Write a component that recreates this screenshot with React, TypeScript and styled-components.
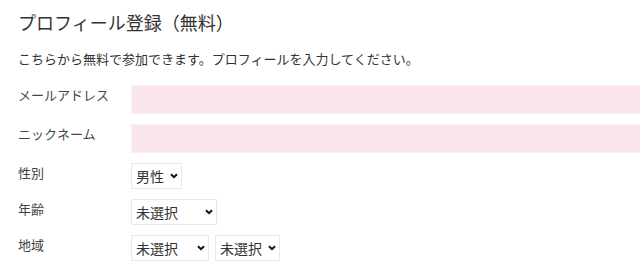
import React from "react";
import styled, { createGlobalStyle } from "styled-components";

const Global = createGlobalStyle`
  html, body { margin: 0; padding: 0; background: #fff; }
  body { font-family: "Noto Sans CJK JP", "Noto Sans", sans-serif; color: #333; }
`;

const Page = styled.div`
  padding: 9px 0 0 18px;
  overflow: hidden;
  width: 640px;
  box-sizing: border-box;
`;

const Title = styled.h1`
  margin: 0;
  font-size: 18px;
  line-height: 27px;
  font-weight: 400;
  color: #333;
`;

const Lead = styled.p`
  margin: 13px 0 0;
  font-size: 13px;
  line-height: 20px;
  color: #333;
`;

const Form = styled.div`
  margin-top: 16px;
  display: flex;
  flex-direction: column;
  gap: 10px;
`;

const Row = styled.div`
  display: flex;
  align-items: flex-start;
`;

const Label = styled.div`
  width: 113px;
  flex: none;
  font-size: 13px;
  line-height: 20px;
  padding-top: 0;
  color: #444;
`;

const TextInput = styled.input`
  flex: 1;
  height: 29px;
  box-sizing: border-box;
  border: 1px solid #fbeef4;
  border-right: none;
  background: #fae5ee;
  margin: 0;
  outline: none;
`;

const Selects = styled.div`
  display: flex;
  gap: 6px;
`;

const SelectWrap = styled.div<{ $w: number }>`
  position: relative;
  width: ${(p) => p.$w}px;
  height: 26px;
`;

const Select = styled.select`
  appearance: none;
  -webkit-appearance: none;
  width: 100%;
  height: 100%;
  box-sizing: border-box;
  border: 1px solid #e8e8e8;
  border-radius: 0;
  background: #fff;
  padding: 0 0 0 4px;
  margin: 0;
  font-family: "Noto Sans CJK JP", sans-serif;
  font-size: 14px;
  color: #333;
  outline: none;
`;

const Chevron = styled.svg`
  position: absolute;
  right: 4px;
  top: 10px;
  width: 8px;
  height: 6px;
  pointer-events: none;
`;

function Sel({ w, value, options }: { w: number; value: string; options: string[] }) {
  return (
    <SelectWrap $w={w}>
      <Select defaultValue={value}>
        {options.map((o) => (
          <option key={o}>{o}</option>
        ))}
      </Select>
      <Chevron viewBox="0 0 8 6">
        <path d="M1 1.2 L4 4.2 L7 1.2" fill="none" stroke="#111" strokeWidth="2" />
      </Chevron>
    </SelectWrap>
  );
}

export default function App() {
  return (
    <>
      <Global />
      <Page>
        <Title>プロフィール登録（無料）</Title>
        <Lead>こちらから無料で参加できます。プロフィールを入力してください。</Lead>
        <Form>
          <Row>
            <Label>メールアドレス</Label>
            <TextInput type="text" />
          </Row>
          <Row>
            <Label>ニックネーム</Label>
            <TextInput type="text" />
          </Row>
          <Row>
            <Label>性別</Label>
            <Sel w={51} value="男性" options={["男性", "女性"]} />
          </Row>
          <Row>
            <Label>年齢</Label>
            <Sel w={86} value="未選択" options={["未選択", "20歳〜24歳", "25歳〜29歳"]} />
          </Row>
          <Row>
            <Label>地域</Label>
            <Selects>
              <Sel w={78} value="未選択" options={["未選択", "北海道", "東北"]} />
              <Sel w={65} value="未選択" options={["未選択", "東京都"]} />
            </Selects>
          </Row>
        </Form>
      </Page>
    </>
  );
}
